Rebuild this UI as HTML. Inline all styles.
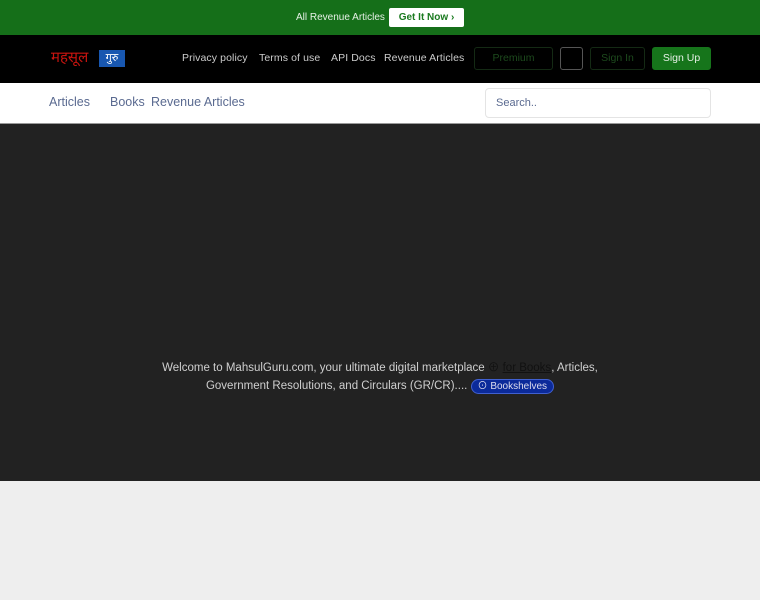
<!DOCTYPE html>
<html><head><style>
*{margin:0;padding:0;box-sizing:border-box}
body{width:760px;height:600px;background:#eeeeee;font-family:"Liberation Sans","Noto Sans CJK SC",sans-serif;position:relative;overflow:hidden}
.top{position:absolute;left:0;top:0;width:760px;height:35px;background:#156f19}
.top .t{position:absolute;left:296px;top:12px;font-size:10px;color:#e6f0e6}
.top .b{position:absolute;left:389px;top:8px;width:75px;height:19px;background:#fff;border-radius:2px;color:#1a7a1f;font-size:10px;font-weight:bold;text-align:center;line-height:19px}
.nav{position:absolute;left:0;top:35px;width:760px;height:48px;background:#000}
.nav a{position:absolute;top:17px;font-size:10.5px;color:#ccc;letter-spacing:0.1px}
.logo1{position:absolute;left:51px;top:12px;color:#c8140f;font-size:15px;font-family:"DejaVu Sans",sans-serif}
.logo2{position:absolute;left:99px;top:50px;width:26px;height:17px;background:#1857b0;color:#fff;font-size:11px;text-align:center;line-height:17px}
.btn{position:absolute;top:47px;height:23px;border:1px solid #142a14;border-radius:3px;font-size:10.5px;color:#1d4a1d;text-align:center;line-height:21px}
.sub{position:absolute;left:0;top:83px;width:760px;height:41px;background:#fff;border-bottom:1px solid #999}
.sub span{position:absolute;top:12px;font-size:12.5px;color:#5a6a90}
.search{position:absolute;left:485px;top:88px;width:226px;height:30px;border:1px solid #e4e4e4;border-radius:4px;background:#fff;font-size:11px;color:#5a6a90;padding:8px 10px}
.hero{position:absolute;left:0;top:124px;width:760px;height:357px;background:#222}
.ht{position:absolute;left:150px;top:235px;width:460px;text-align:center;font-size:11.5px;line-height:18px;color:#cfcfcf}
.bs{display:inline-block;background:#0b2a9a;color:#dde;border:1px solid #4060d0;border-radius:8px;padding:0 6px;font-size:10px;line-height:13px}
</style></head><body>
<div class="top"><div class="t">All Revenue Articles</div><div class="b">Get It Now ›</div></div>
<div class="nav">
<div class="logo1">महसूल</div>
<a style="left:182px">Privacy policy</a><a style="left:259px">Terms of use</a><a style="left:331px">API Docs</a><a style="left:384px">Revenue Articles</a>
</div>
<div class="logo2">गुरु</div>
<div class="btn" style="left:474px;width:79px">Premium</div>
<div class="btn" style="left:560px;width:23px;border-color:#555"></div>
<div class="btn" style="left:590px;width:55px">Sign In</div>
<div class="btn" style="left:652px;width:59px;background:#16751b;border-color:#16751b;color:#e6f0e6">Sign Up</div>
<div class="sub"><span style="left:49px">Articles</span><span style="left:110px">Books</span><span style="left:151px">Revenue Articles</span></div>
<div class="search">Search..</div>
<div class="hero"><div class="ht">Welcome to MahsulGuru.com, your ultimate digital marketplace <span style="color:#111">⊕ <u>for Books</u></span>, Articles, Government Resolutions, and Circulars (GR/CR).... <span class="bs">⊙ Bookshelves</span></div></div>
</body></html>
